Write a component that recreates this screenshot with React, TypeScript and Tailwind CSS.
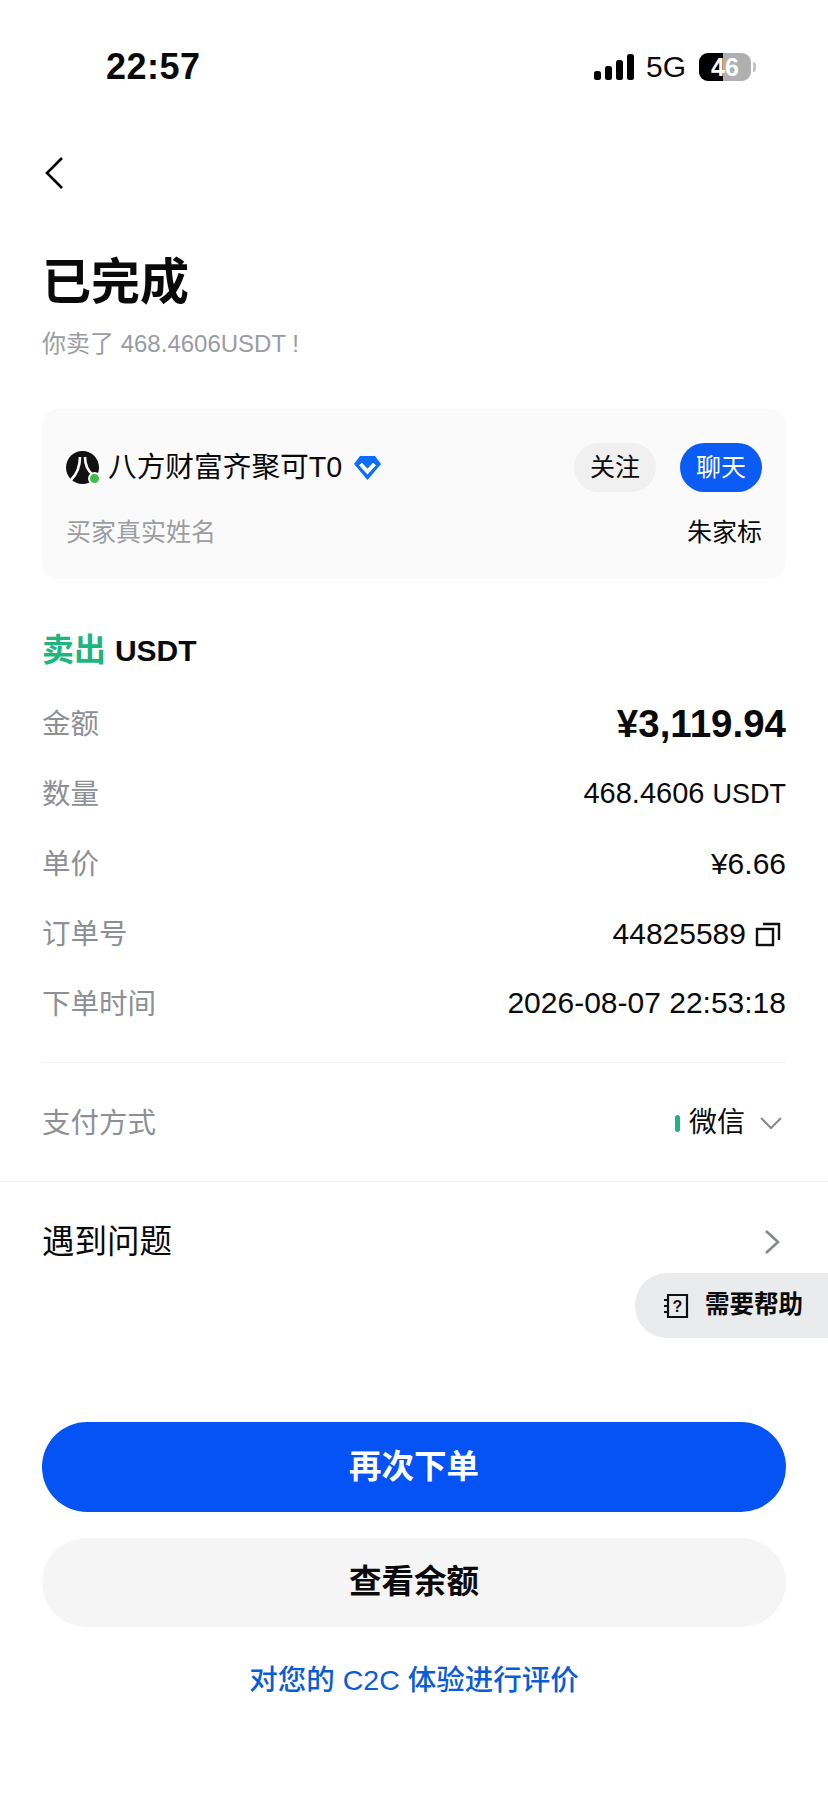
import React from 'react';

const Row = ({ label, children }: { label: string; children: React.ReactNode }) => (
  <div className="flex h-[70px] items-center justify-between">
    <span className="text-[28.5px] text-[#8c8f94]">{label}</span>
    {children}
  </div>
);

const Signal = () => (
  <svg width="40" height="26" viewBox="0 0 40 26" fill="#000">
    <rect x="0" y="17" width="7" height="9" rx="2.5" />
    <rect x="11" y="12" width="7" height="14" rx="2.5" />
    <rect x="22" y="6" width="7" height="20" rx="2.5" />
    <rect x="33" y="0" width="7" height="26" rx="2.5" />
  </svg>
);

const Battery = () => (
  <div className="ml-[13px] flex items-center gap-[2px]">
    <div className="relative flex h-[28px] w-[52px] items-center justify-center overflow-hidden rounded-[9px] bg-[#b0b0b0]">
      <div className="absolute inset-y-0 left-0 w-[24px] bg-black" />
      <span className="relative text-[25px] leading-none font-bold text-white">46</span>
    </div>
    <div className="h-[10px] w-[3px] rounded-r-full bg-[#c4c4c4]" />
  </div>
);

const Avatar = () => (
  <div className="relative h-[33px] w-[33px] shrink-0 rounded-full bg-[#111]">
    <svg width="33" height="33" viewBox="0 0 33 33" fill="none" stroke="#fff" strokeWidth="2.6">
      <path d="M14 6c0 9-3 17-9 23" />
      <path d="M19 6c0 8 3 14 8 18" />
    </svg>
    <div className="absolute right-[-2px] bottom-[-1px] h-[13px] w-[13px] rounded-full border-2 border-[#fafafa] bg-[#3dbb45]" />
  </div>
);

const Diamond = () => (
  <svg className="ml-[3px]" width="27" height="24" viewBox="0 0 27 24">
    <path d="M6 0h15l6 8-13.500 16L0 8z" fill="#0d6efd" />
    <path d="M6.500 8l7 7.500 7-7.500" fill="none" stroke="#fff" strokeWidth="4" />
  </svg>
);

const CopyIcon = () => (
  <svg width="26" height="26" viewBox="0 0 26 26" fill="none" stroke="#111" strokeWidth="2.400">
    <rect x="2" y="8" width="16" height="16" />
    <path d="M8 3h16v16" />
  </svg>
);

const HelpIcon = () => (
  <svg width="26" height="26" viewBox="0 0 26 26" fill="none" stroke="#111" strokeWidth="2.200">
    <path d="M5 2h19v22H5z" />
    <path d="M1 7h4M1 13h4M1 19h4" />
    <text x="14.500" y="19" textAnchor="middle" fontSize="16" fontWeight="700" fill="#111" stroke="none">?</text>
  </svg>
);

export default function App() {
  return (
    <div className="relative h-[1801px] w-[828px] overflow-hidden bg-white font-['Liberation_Sans','Noto_Sans_CJK_SC',sans-serif] text-[#0a0a0a]">
      <div className="flex h-[134px] items-center justify-between pr-[72px] pl-[106px]">
        <span className="text-[36px] font-bold tracking-[0.5px]">22:57</span>
        <div className="flex items-center">
          <Signal />
          <span className="ml-[12px] text-[30px] leading-none">5G</span>
          <Battery />
        </div>
      </div>

      <div className="px-[42px]">
        <svg className="mt-[22px] ml-[2px] block" width="20" height="34" viewBox="0 0 20 34" fill="none" stroke="#000" strokeWidth="2.600">
          <path d="M18 2 3 17l15 15" />
        </svg>
        <h1 className="mt-[60px] text-[49px] leading-[64px] font-bold">已完成</h1>
        <p className="mt-[13px] text-[24px] leading-[34px] text-[#999ca1]">你卖了 468.4606USDT !</p>

        <div className="mt-[48px] h-[170px] rounded-[16px] bg-[#fafafa] px-[24px] pt-[34px]">
          <div className="flex items-center justify-between">
            <div className="flex items-center gap-[9px]">
              <Avatar />
              <span className="text-[28.7px] leading-none">八方财富齐聚可T0</span>
              <Diamond />
            </div>
            <div className="flex items-center gap-[24px]">
              <button className="h-[49px] w-[82px] rounded-full bg-[#f0f0f0] text-[25px]">关注</button>
              <button className="h-[49px] w-[82px] rounded-full bg-[#0a5cf5] text-[25px] text-white">聊天</button>
            </div>
          </div>
          <div className="mt-[20px] flex items-center justify-between text-[25px] leading-[40px]">
            <span className="text-[#9a9da2]">买家真实姓名</span>
            <span>朱家标</span>
          </div>
        </div>

        <div className="mt-[49px] text-[32px] leading-[44px] font-bold">
          <span className="text-[#1fb57f]">卖出</span> <span className="text-[30px]">USDT</span>
        </div>

        <div className="mt-[16px]">
          <Row label="金额">
            <span className="text-[38.500px] font-bold">¥3,119.94</span>
          </Row>
          <Row label="数量">
            <span className="text-[29px]">468.4606 <span className="text-[27px]">USDT</span></span>
          </Row>
          <Row label="单价">
            <span className="mb-[2px] text-[30px]">¥6.66</span>
          </Row>
          <Row label="订单号">
            <div className="flex items-center gap-[9px] pr-[5px]">
              <span className="mb-[2px] text-[30px]">44825589</span>
              <CopyIcon />
            </div>
          </Row>
          <Row label="下单时间">
            <span className="mb-[4px] text-[30px]">2026-08-07 22:53:18</span>
          </Row>
        </div>

        <div className="mt-[23px] h-px bg-[#f2f2f3]" />

        <div className="flex h-[118px] items-center justify-between pt-[2px]">
          <span className="text-[28.500px] text-[#8c8f94]">支付方式</span>
          <div className="flex items-center">
            <div className="h-[17px] w-[5px] rounded-full bg-[#1fb57f]" />
            <span className="ml-[9px] text-[28px]">微信</span>
            <svg className="mr-[4px] ml-[15px]" width="22" height="14" viewBox="0 0 22 14" fill="none" stroke="#85888d" strokeWidth="2">
              <path d="M1 2l10 10L21 2" />
            </svg>
          </div>
        </div>
      </div>

      <div className="h-px bg-[#f0f0f1]" />

      <div className="flex h-[118px] items-center justify-between pt-[2px] pr-[48px] pl-[42px]">
        <span className="text-[32.500px]">遇到问题</span>
        <svg width="16" height="26" viewBox="0 0 16 26" fill="none" stroke="#85888d" strokeWidth="2.600">
          <path d="M2 2l12 11L2 24" />
        </svg>
      </div>

      <div className="px-[42px] pt-[122px]">
        <button className="h-[90px] w-full rounded-full bg-[#0552f5] text-[32.500px] font-bold text-white">再次下单</button>
        <button className="mt-[26px] h-[89px] w-full rounded-full bg-[#f5f5f5] text-[32.500px] font-bold">查看余额</button>
        <p className="mt-[33px] text-center text-[28.500px] leading-[40px] font-medium text-[#0a5cd8]">对您的 C2C 体验进行评价</p>
      </div>

      <div className="absolute top-[1273px] right-0 flex h-[65px] w-[193px] items-center gap-[16px] rounded-l-[32px] bg-[#e9ebed] pl-[28px]">
        <HelpIcon />
        <span className="text-[24.500px] font-bold">需要帮助</span>
      </div>
    </div>
  );
}
